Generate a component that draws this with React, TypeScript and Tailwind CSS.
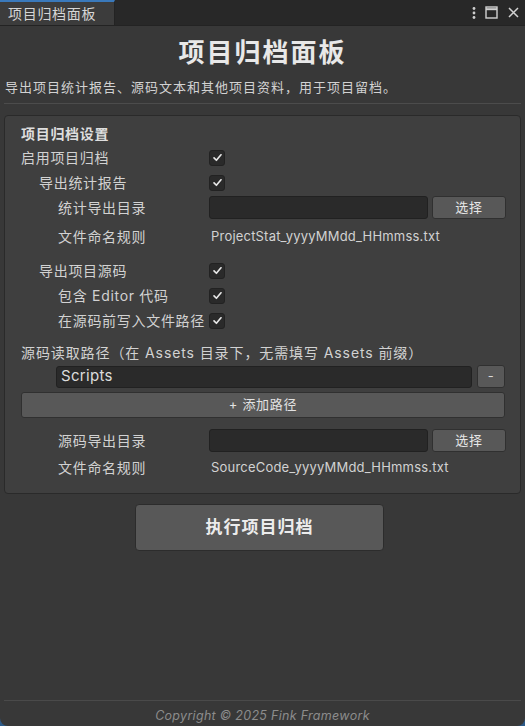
import type { ReactNode } from "react";

const font = { fontFamily: 'Inter, "Noto Sans CJK SC", sans-serif' };

function Check() {
  return (
    <span className="flex size-4 shrink-0 items-center justify-center rounded-[3px] border border-[#222222] bg-[#2a2a2a]">
      <svg className="size-[11px]" fill="none" viewBox="0 0 12 12">
        <path d="M2.2 6.4 4.8 9 9.8 3" stroke="#e8e8e8" strokeLinecap="round" strokeLinejoin="round" strokeWidth="1.8" />
      </svg>
    </span>
  );
}

function Row({
  indent,
  label,
  children,
  className = "",
}: {
  indent: number;
  label: string;
  children?: ReactNode;
  className?: string;
}) {
  const pad = indent === 0 ? "pl-0" : indent === 1 ? "pl-[18px]" : "pl-[37px]";
  return (
    <div className={`flex h-[25px] items-center ${className}`}>
      <div className={`w-[188px] shrink-0 whitespace-nowrap ${pad}`}>{label}</div>
      <div className="flex min-w-0 flex-1 items-center gap-1">{children}</div>
    </div>
  );
}

function PathField() {
  return (
    <>
      <div className="h-[23px] w-[219px] rounded-[3px] border border-[#212121] bg-[#2a2a2a]" />
      <button className="h-[23px] w-[74px] rounded-[3px] border border-[#303030] bg-[#585858] text-[13px] text-[#e6e6e6]" type="button">
        选择
      </button>
    </>
  );
}

export default function App() {
  return (
    <div className="h-[726px] w-[525px] bg-[#2c5a88]" style={font}>
      <div className="flex h-full flex-col overflow-hidden rounded-b-[8px] bg-[#383838] text-[14px] tracking-[0.7px] text-[#d2d2d2]">
        <div className="flex h-[26px] shrink-0 items-stretch justify-between border-b border-[#232323] bg-[#282828]">
          <div className="flex w-[115px] items-center border-t-2 border-r border-t-[#3a79bb] border-r-[#232323] bg-[#3c3c3c] pl-[8px] text-[#d6d6d6]">
            项目归档面板
          </div>
          <div className="flex items-center gap-[9px] pr-[5px] text-[#cfcfcf]">
            <svg className="h-[14px] w-[4px]" viewBox="0 0 4 14">
              <circle cx="2" cy="2.5" fill="#cfcfcf" r="1.4" />
              <circle cx="2" cy="7" fill="#cfcfcf" r="1.4" />
              <circle cx="2" cy="11.5" fill="#cfcfcf" r="1.4" />
            </svg>
            <svg className="size-[13px]" fill="none" viewBox="0 0 13 13">
              <rect height="11" stroke="#d2d2d2" strokeWidth="1.4" width="11" x="1" y="1" />
              <path d="M1 3.2h11" stroke="#d2d2d2" strokeWidth="2" />
            </svg>
            <svg className="size-[13px]" fill="none" viewBox="0 0 13 13">
              <path d="M2 2l9 9M11 2l-9 9" stroke="#d2d2d2" strokeWidth="1.5" />
            </svg>
          </div>
        </div>

        <div className="flex flex-1 flex-col px-[4px]">
          <h1 className="pt-[10px] text-center text-[26px] font-bold leading-[34px] tracking-[2px] text-[#e8e8e8]">项目归档面板</h1>
          <p className="mt-[8px] pl-[1px] text-[13px] leading-[18px] tracking-[1px]">导出项目统计报告、源码文本和其他项目资料，用于项目留档。</p>
          <div className="mt-[7px] h-px bg-[#4c4c4c]" />

          <section className="mt-[11px] rounded-[4px] border border-[#2a2a2a] bg-[#3f3f3f] pb-[13px] pl-[16px] pr-[13px] pt-[7px]">
            <div className="h-[22px] font-bold leading-[22px] text-[#dedede]">项目归档设置</div>
            <Row indent={0} label="启用项目归档">
              <Check />
            </Row>
            <Row indent={1} label="导出统计报告">
              <Check />
            </Row>
            <Row indent={2} label="统计导出目录">
              <PathField />
            </Row>
            <Row className="mt-[4px]" indent={2} label="文件命名规则">
              <span className="pl-[2px] text-[13px] tracking-[0.2px]">ProjectStat_yyyyMMdd_HHmmss.txt</span>
            </Row>
            <div className="h-[9px]" />
            <Row indent={1} label="导出项目源码">
              <Check />
            </Row>
            <Row indent={2} label="包含 Editor 代码">
              <Check />
            </Row>
            <Row indent={2} label="在源码前写入文件路径">
              <Check />
            </Row>
            <div className="mt-[7px] h-[25px] leading-[25px] tracking-[0.9px]">源码读取路径（在 Assets 目录下，无需填写 Assets 前缀）</div>
            <div className="mr-[2px] flex items-center gap-[5px] pl-[35px]">
              <div className="flex h-[22px] flex-1 items-center rounded-[3px] border border-[#212121] bg-[#2a2a2a] px-[4px] text-[15px] tracking-[0.3px] text-[#dcdcdc]">
                Scripts
              </div>
              <button className="h-[23px] w-[28px] rounded-[3px] border border-[#303030] bg-[#585858] text-[13px] leading-none text-[#d8d8d8]" type="button">
                -
              </button>
            </div>
            <button className="mt-[4px] h-[26px] w-[calc(100%-2px)] rounded-[3px] border border-[#303030] bg-[#585858] text-[13px] text-[#e2e2e2]" type="button">
              + 添加路径
            </button>
            <div className="h-[10px]" />
            <Row indent={2} label="源码导出目录">
              <PathField />
            </Row>
            <Row className="mt-[2px]" indent={2} label="文件命名规则">
              <span className="pl-[2px] text-[13px] tracking-[0.2px]">SourceCode_yyyyMMdd_HHmmss.txt</span>
            </Row>
          </section>

          <div className="mt-[10px] flex justify-center pr-[6px]">
            <button className="h-[47px] w-[249px] rounded-[4px] border border-[#2c2c2c] bg-[#585858] text-[17px] font-bold tracking-[1px] text-[#ececec]" type="button">
              执行项目归档
            </button>
          </div>

          <div className="flex-1" />
          <div className="h-px bg-[#4a4a4a]" />
          <div className="h-[25px] text-center text-[12.5px] italic leading-[30px] tracking-[0.3px] text-[#8c8c8c]">Copyright © 2025 Fink Framework</div>
        </div>
      </div>
    </div>
  );
}
